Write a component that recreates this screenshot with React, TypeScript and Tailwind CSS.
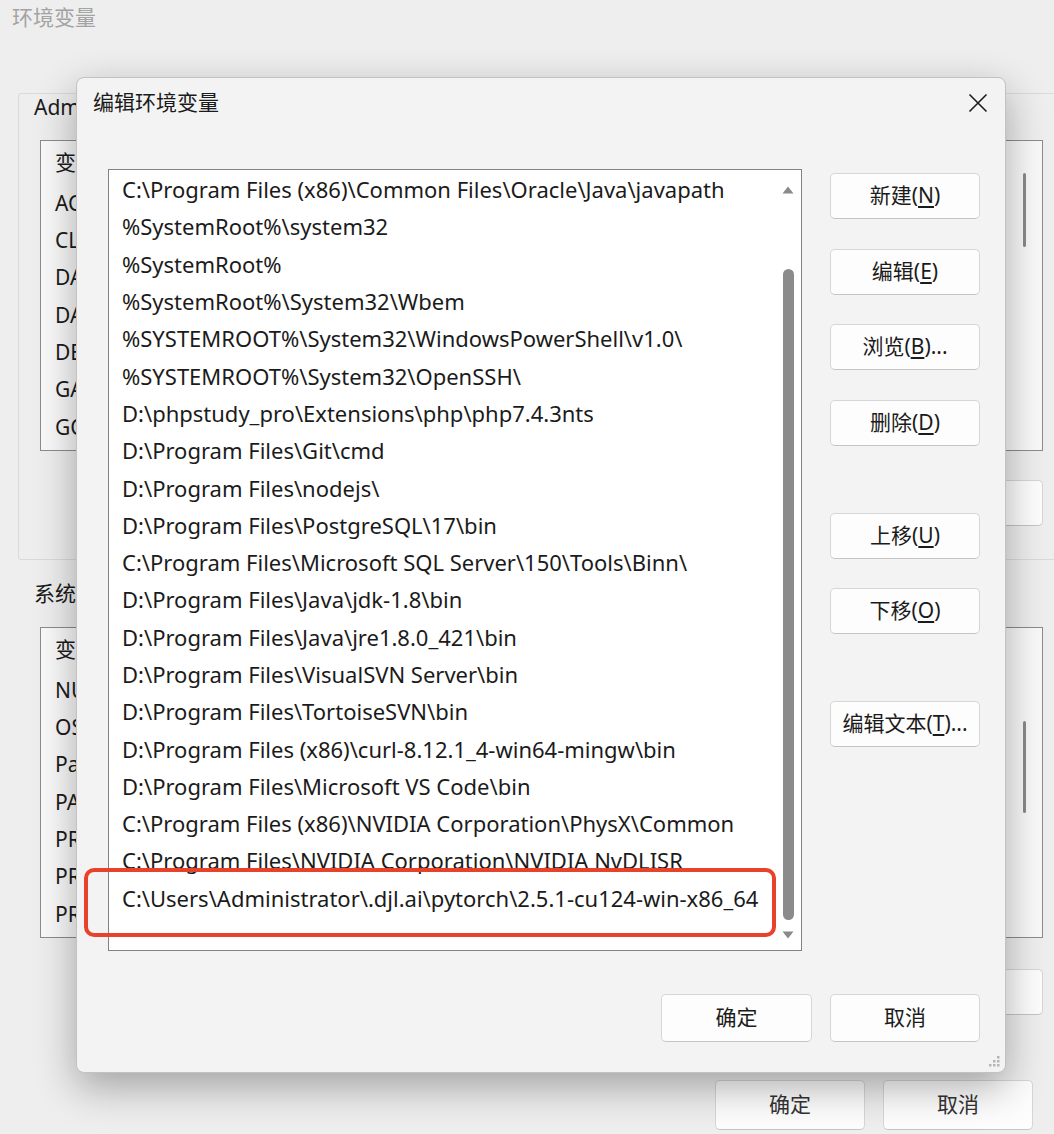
import type { ReactNode } from 'react';

const paths = [
  'C:\\Program Files (x86)\\Common Files\\Oracle\\Java\\javapath',
  '%SystemRoot%\\system32',
  '%SystemRoot%',
  '%SystemRoot%\\System32\\Wbem',
  '%SYSTEMROOT%\\System32\\WindowsPowerShell\\v1.0\\',
  '%SYSTEMROOT%\\System32\\OpenSSH\\',
  'D:\\phpstudy_pro\\Extensions\\php\\php7.4.3nts',
  'D:\\Program Files\\Git\\cmd',
  'D:\\Program Files\\nodejs\\',
  'D:\\Program Files\\PostgreSQL\\17\\bin',
  'C:\\Program Files\\Microsoft SQL Server\\150\\Tools\\Binn\\',
  'D:\\Program Files\\Java\\jdk-1.8\\bin',
  'D:\\Program Files\\Java\\jre1.8.0_421\\bin',
  'D:\\Program Files\\VisualSVN Server\\bin',
  'D:\\Program Files\\TortoiseSVN\\bin',
  'D:\\Program Files (x86)\\curl-8.12.1_4-win64-mingw\\bin',
  'D:\\Program Files\\Microsoft VS Code\\bin',
  'C:\\Program Files (x86)\\NVIDIA Corporation\\PhysX\\Common',
  'C:\\Program Files\\NVIDIA Corporation\\NVIDIA NvDLISR',
  'C:\\Users\\Administrator\\.djl.ai\\pytorch\\2.5.1-cu124-win-x86_64',
];

const userVars = ['ACSvcPort', 'CLASSPATH', 'DATAGRIP', 'DATASPELL', 'DEVECOSTUDIO', 'GATEWAY', 'GOLAND'];
const sysVars = ['NUMBER_OF_PROCESSORS', 'OS', 'Path', 'PATHEXT', 'PROCESSOR_ARCHITECTURE', 'PROCESSOR_IDENTIFIER', 'PROCESSOR_LEVEL'];

// side buttons of the edit dialog; gap = space above the button
const sideButtons = [
  { label: '新建', key: 'N', tail: '', gap: 'mt-0' },
  { label: '编辑', key: 'E', tail: '', gap: 'mt-[30px]' },
  { label: '浏览', key: 'B', tail: '...', gap: 'mt-[29px]' },
  { label: '删除', key: 'D', tail: '', gap: 'mt-[30px]' },
  { label: '上移', key: 'U', tail: '', gap: 'mt-[67px]' },
  { label: '下移', key: 'O', tail: '', gap: 'mt-[29px]' },
  { label: '编辑文本', key: 'T', tail: '...', gap: 'mt-[67px]' },
];

function WinButton({ children, className = '' }: { children: ReactNode; className?: string }) {
  return (
    <div
      className={`flex items-center justify-center h-[46px] rounded-[5px] border border-[#d6d6d6] border-b-[#c4c4c4] bg-[#fdfdfd] text-[21px] text-[#1b1b1b] ${className}`}
    >
      {children}
    </div>
  );
}

function BgList({ rows, thumb }: { rows: string[]; thumb: string }) {
  return (
    <div className="flex w-[1003px] h-[311px] border border-[#8c8c8c] bg-[#f9f9f9]">
      <div className="flex-1">
        <div className="h-[44px] flex items-center pl-[14px] text-[21px] text-[#1b1b1b]">变量</div>
        {rows.map((r) => (
          <div key={r} className="h-[37.3px] flex items-center pl-[14px] text-[21px] text-[#1b1b1b]">
            {r}
          </div>
        ))}
      </div>
      <div className="w-[36px] flex justify-center">
        <div className={`w-[3px] rounded-full bg-[#8a8a8a] ${thumb}`} />
      </div>
    </div>
  );
}

export default function App() {
  return (
    <div className="relative w-[1054px] h-[1134px] overflow-hidden bg-[#eeeeee] font-['Noto_Sans','Noto_Sans_CJK_SC',sans-serif]">
      {/* background window: 环境变量 */}
      <div className="h-[36px] flex items-center pl-[12px] text-[21px] text-[#a3a3a3]">环境变量</div>

      <div className="ml-[18px] mt-[57px] w-[1050px] h-[467px] border border-[#dadada] rounded-[3px] pl-[21px]">
        <div className="h-[28px] flex items-center pl-[15px] -ml-[21px] text-[21px] text-[#1b1b1b]">
          Administrator 的用户变量(U)
        </div>
        <div className="mt-[18px]">
          <BgList rows={userVars} thumb="mt-[32px] h-[74px]" />
        </div>
        <div className="mt-[29px] w-[1003px] flex justify-end gap-[18px]">
          <WinButton className="w-[150px] bg-[#f6f6f6]">新建(N)...</WinButton>
          <WinButton className="w-[150px] bg-[#f6f6f6]">编辑(E)...</WinButton>
          <WinButton className="w-[150px] bg-[#f6f6f6]">删除(D)</WinButton>
        </div>
      </div>

      <div className="mt-[20px] ml-[34px] h-[28px] flex items-center text-[21px] text-[#1b1b1b]">系统变量(S)</div>
      <div className="mt-[19px] ml-[40px]">
        <BgList rows={sysVars} thumb="mt-[93px] h-[92px]" />
      </div>
      <div className="mt-[31px] ml-[40px] w-[1003px] flex justify-end gap-[18px]">
        <WinButton className="w-[150px] bg-[#f6f6f6]">新建(W)...</WinButton>
        <WinButton className="w-[150px] bg-[#f6f6f6]">编辑(I)...</WinButton>
        <WinButton className="w-[150px] bg-[#f6f6f6]">删除(L)</WinButton>
      </div>
      <div className="mt-[65px] pr-[21px] flex justify-end gap-[18px]">
        <WinButton className="w-[150px] h-[50px] bg-[#ebebeb] text-[#333333]">确定</WinButton>
        <WinButton className="w-[150px] h-[50px] bg-[#ebebeb] text-[#333333]">取消</WinButton>
      </div>

      {/* dialog: 编辑环境变量 */}
      <div className="absolute left-[76px] top-[77px] w-[930px] h-[996px] flex flex-col rounded-[8px] border border-[#c2c2c2] bg-[#f3f3f3] shadow-[0_14px_40px_rgba(0,0,0,0.32)]">
        <div className="h-[50px] flex items-center justify-between pl-[16px] pr-[17px]">
          <span className="text-[21px] text-[#1b1b1b]">编辑环境变量</span>
          <svg width="20" height="20" viewBox="0 0 20 20">
            <path d="M1.5 1.5L18.5 18.5M18.5 1.5L1.5 18.5" stroke="#1b1b1b" strokeWidth="1.6" />
          </svg>
        </div>

        <div className="mt-[41px] flex">
          <div className="ml-[31px] w-[694px] h-[782px] flex border border-[#828282] bg-white">
            <div className="flex-1 pt-[1px] pl-[13px] overflow-hidden">
              {paths.map((p) => (
                <div key={p} className="h-[37.3px] flex items-center text-[22px] text-[#1b1b1b] whitespace-nowrap">
                  {p}
                </div>
              ))}
            </div>
            <div className="w-[24px] flex flex-col items-center pt-[16px] pr-[2px]">
              <svg width="12" height="8" viewBox="0 0 12 8">
                <path d="M6 0.5L11.5 7.5H0.5Z" fill="#8a8a8a" />
              </svg>
              <div className="mt-[75px] w-[11px] h-[651px] rounded-full bg-[#8b8b8b]" />
              <svg className="mt-[11px]" width="12" height="8" viewBox="0 0 12 8">
                <path d="M6 7.5L11.5 0.5H0.5Z" fill="#8a8a8a" />
              </svg>
            </div>
          </div>

          <div className="ml-[28px] pt-[4px] w-[150px] flex flex-col">
            {sideButtons.map((b) => (
              <WinButton key={b.key} className={b.gap}>
                {b.label}(<span className="underline underline-offset-[3px]">{b.key}</span>){b.tail}
              </WinButton>
            ))}
          </div>
        </div>

        <div className="mt-[43px] pr-[25px] flex justify-end gap-[18px]">
          <WinButton className="w-[151px] h-[48px] border-[1.5px] border-[#5b8ec2] border-b-[#5b8ec2]">确定</WinButton>
          <WinButton className="w-[150px] h-[48px]">取消</WinButton>
        </div>

        {/* resize grip */}
        <svg className="absolute right-[4px] bottom-[4px]" width="14" height="14" viewBox="0 0 14 14">
          <g fill="#b5b5b5">
            <rect x="10" y="2" width="2.5" height="2.5" />
            <rect x="6" y="6" width="2.5" height="2.5" />
            <rect x="10" y="6" width="2.5" height="2.5" />
            <rect x="2" y="10" width="2.5" height="2.5" />
            <rect x="6" y="10" width="2.5" height="2.5" />
            <rect x="10" y="10" width="2.5" height="2.5" />
          </g>
        </svg>
      </div>

      {/* red annotation box */}
      <div className="absolute left-[84px] top-[868px] w-[692px] h-[69px] rounded-[10px] border-[4px] border-[#e8432a]" />
    </div>
  );
}
